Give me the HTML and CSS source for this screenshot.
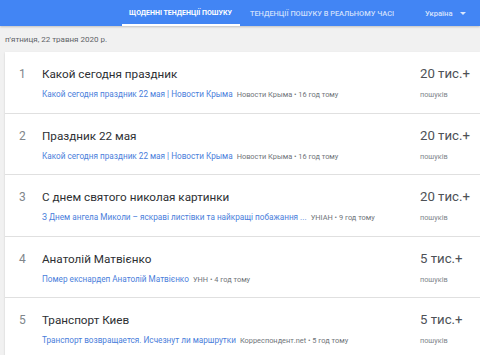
FILE: index.html
```html
<!DOCTYPE html>
<html lang="uk">
<head>
<meta charset="utf-8">
<title>Тенденції пошуку</title>
<link rel="stylesheet" href="styles.css">
</head>
<body>
<div class="header">
	<div class="tab active">ЩОДЕННІ ТЕНДЕНЦІЇ ПОШУКУ</div>
	<div class="tab">ТЕНДЕНЦІЇ ПОШУКУ В РЕАЛЬНОМУ ЧАСІ</div>
	<div class="geo">Україна <span class="arrow"></span></div>
</div>
<div class="date">п'ятниця, 22 травня 2020 р.</div>
<div class="card">
	<div class="row">
		<div class="idx">1</div>
		<div class="main">
			<div class="title">Какой сегодня праздник</div>
			<div class="sub"><span class="link">Какой сегодня праздник 22 мая | Новости Крыма</span> <span class="meta">Новости Крыма • 16 год тому</span></div>
		</div>
		<div class="count">
			<div class="num">20 тис.+</div>
			<div class="lbl">пошуків</div>
		</div>
	</div>
	<div class="row">
		<div class="idx">2</div>
		<div class="main">
			<div class="title">Праздник 22 мая</div>
			<div class="sub"><span class="link">Какой сегодня праздник 22 мая | Новости Крыма</span> <span class="meta">Новости Крыма • 16 год тому</span></div>
		</div>
		<div class="count">
			<div class="num">20 тис.+</div>
			<div class="lbl">пошуків</div>
		</div>
	</div>
	<div class="row">
		<div class="idx">3</div>
		<div class="main">
			<div class="title">С днем святого николая картинки</div>
			<div class="sub"><span class="link">З Днем ангела Миколи – яскраві листівки та найкращі побажання ...</span> <span class="meta">УНІАН • 9 год тому</span></div>
		</div>
		<div class="count">
			<div class="num">20 тис.+</div>
			<div class="lbl">пошуків</div>
		</div>
	</div>
	<div class="row">
		<div class="idx">4</div>
		<div class="main">
			<div class="title">Анатолій Матвієнко</div>
			<div class="sub"><span class="link">Помер екснардеп Анатолій Матвієнко</span> <span class="meta">УНН • 4 год тому</span></div>
		</div>
		<div class="count">
			<div class="num">5 тис.+</div>
			<div class="lbl">пошуків</div>
		</div>
	</div>
	<div class="row">
		<div class="idx">5</div>
		<div class="main">
			<div class="title">Транспорт Киев</div>
			<div class="sub"><span class="link">Транспорт возвращается. Исчезнут ли маршрутки</span> <span class="meta">Корреспондент.net • 5 год тому</span></div>
		</div>
		<div class="count">
			<div class="num">5 тис.+</div>
			<div class="lbl">пошуків</div>
		</div>
	</div>
</div>
</body>
</html>
```
FILE: styles.css
```css
body {
	margin: 0;
	background-color: #F1F1F1;
	font-family: Roboto, "Liberation Sans", sans-serif;
	color: #202124;
	overflow: hidden;
}
.header {
	height: 26px;
	background-color: #4285F4;
	display: flex;
	align-items: stretch;
	padding-left: 122px;
	box-shadow: 0 1px 2px rgba(0,0,0,0.2);
}
.tab {
	font-size: 7.4px;
	font-weight: 500;
	color: rgba(255,255,255,0.75);
	display: flex;
	align-items: center;
	padding: 0 9px 0 10px;
	white-space: nowrap;
}
.tab.active {
	font-size: 7px;
	color: #FFFFFF;
	font-weight: 700;
	box-shadow: inset 0 -2px 0 #FFFFFF;
	padding: 0 8px 0 7px;
}
.geo {
	font-size: 7.6px;
	font-weight: 500;
	color: rgba(255,255,255,0.8);
	display: flex;
	align-items: center;
	margin-left: 22px;
	white-space: nowrap;
}
.arrow {
	display: inline-block;
	margin-left: 7px;
	border-left: 3px solid transparent;
	border-right: 3px solid transparent;
	border-top: 3px solid rgba(255,255,255,0.8);
}
.date {
	font-size: 8px;
	color: #5F6368;
	padding: 9px 0 0 5px;
	height: 17px;
}
.card {
	margin-left: 5px;
	background-color: #FFFFFF;
	box-shadow: 0 1px 2px rgba(0,0,0,0.15);
}
.row {
	display: flex;
	height: 60.5px;
	border-bottom: 1px solid #E0E0E0;
}
.idx {
	width: 37px;
	font-size: 12px;
	color: #80868B;
	padding: 15px 0 0 14px;
	box-sizing: border-box;
}
.main {
	flex: 1;
	padding-top: 15px;
}
.title {
	font-size: 11.7px;
	color: #2D2F33;
	height: 22px;
}
.sub {
	font-size: 8.2px;
	white-space: nowrap;
}
.link {
	color: #4A7EDB;
}
.meta {
	font-size: 7.4px;
	color: #70757A;
	margin-left: 2px;
}
.count {
	width: 60px;
	padding-top: 14px;
}
.num {
	font-size: 13.2px;
	color: #4D5156;
	height: 24px;
}
.lbl {
	font-size: 7.3px;
	color: #80868B;
}
```
